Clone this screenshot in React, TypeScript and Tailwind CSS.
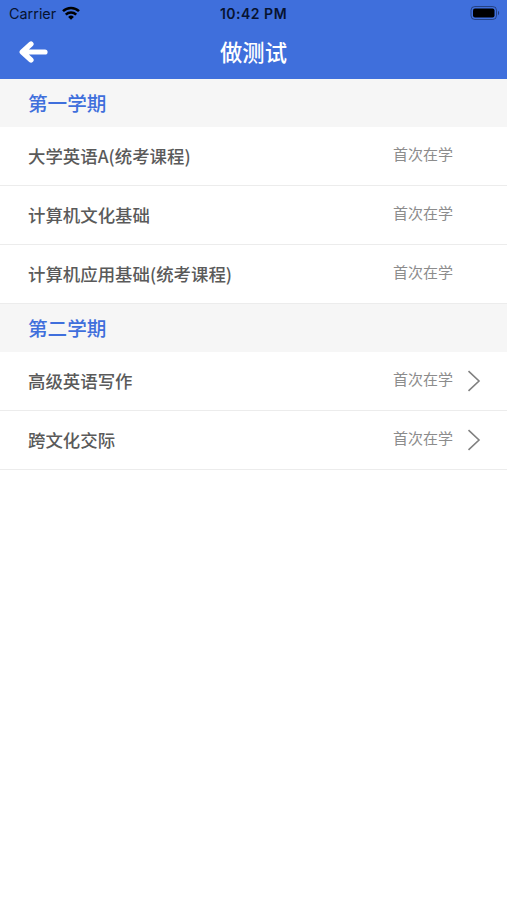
interface Course {
  name: string;
  status: string;
  open?: boolean;
}

interface Term {
  title: string;
  courses: Course[];
}

const terms: Term[] = [
  {
    title: "第一学期",
    courses: [
      { name: "大学英语A(统考课程)", status: "首次在学" },
      { name: "计算机文化基础", status: "首次在学" },
      { name: "计算机应用基础(统考课程)", status: "首次在学" },
    ],
  },
  {
    title: "第二学期",
    courses: [
      { name: "高级英语写作", status: "首次在学", open: true },
      { name: "跨文化交际", status: "首次在学", open: true },
    ],
  },
];

function StatusBar() {
  return (
    <div className="grid h-[27px] grid-cols-3 items-center pl-[9px] pr-[7px] font-['Inter',sans-serif] text-[#071330]">
      <div className="flex items-center gap-[6px]">
        <span className="pt-px text-[14.4px] leading-none">Carrier</span>
        <svg className="-mt-px" width="18" height="14" viewBox="0 0 18 14" fill="none" stroke="#000" strokeWidth="2.5">
          <path d="M1 5.2a11.5 11.5 0 0 1 16 0" />
          <path d="M3.8 8.6a7.4 7.4 0 0 1 10.4 0" />
          <path d="M9 13.8 6.1 10.9a4.2 4.2 0 0 1 5.8 0z" fill="#000" stroke="none" />
        </svg>
      </div>
      <span className="-ml-[2px] text-center text-[14px] font-semibold leading-none tracking-[0.5px] whitespace-nowrap">10:42 PM</span>
      <svg className="-mt-px justify-self-end" width="30" height="14" viewBox="0 0 30 14">
        <rect x="1" y="0.5" width="25.5" height="13" rx="3.8" fill="none" stroke="#000" strokeOpacity="0.4" />
        <rect x="3" y="2.5" width="21.5" height="9" rx="2" fill="#000" />
        <path d="M28 4.8a2.6 2.6 0 0 1 0 4.4z" fill="#000" fillOpacity="0.45" />
      </svg>
    </div>
  );
}

function NavBar() {
  return (
    <div className="grid h-[52px] grid-cols-[60px_1fr_60px] items-center pb-[3px] text-white">
      <svg className="ml-[19px]" width="30" height="22" viewBox="0 0 30 22" fill="none" stroke="currentColor" strokeWidth="5.2" strokeLinecap="round" strokeLinejoin="round">
        <path d="M26 11H4M12 3 3.2 11l8.8 8" />
      </svg>
      <h1 className="text-center text-[22.3px] font-medium leading-none">做测试</h1>
    </div>
  );
}

function CourseRow({ course }: { course: Course }) {
  return (
    <li className="flex h-[59.25px] items-center border-b border-[#ececec] pl-7 pr-[26px]">
      <span className="flex-1 text-[17.4px] font-medium leading-none tracking-[0.03px] text-[#5a5a5a]">{course.name}</span>
      <span className="-mt-[5px] text-[15px] leading-none text-[#8c8c8c]">{course.status}</span>
      <span className="flex w-[28px] justify-end">
        {course.open && (
          <svg width="14" height="22" viewBox="0 0 14 22" fill="none" stroke="#808080" strokeWidth="1.6">
            <path d="M1.5 1.2 12 11 1.5 20.8" />
          </svg>
        )}
      </span>
    </li>
  );
}

export default function App() {
  return (
    <div className="min-h-screen bg-white font-['Noto_Sans_CJK_SC',sans-serif]">
      <header className="bg-[#3f6fdc]">
        <StatusBar />
        <NavBar />
      </header>
      {terms.map((term) => (
        <section key={term.title}>
          <h2 className="flex h-[47.5px] items-center bg-[#f6f6f6] pl-7 text-[19.6px] font-medium leading-none text-[#3f6fdc]">
            {term.title}
          </h2>
          <ul>
            {term.courses.map((course) => (
              <CourseRow key={course.name} course={course} />
            ))}
          </ul>
        </section>
      ))}
    </div>
  );
}
